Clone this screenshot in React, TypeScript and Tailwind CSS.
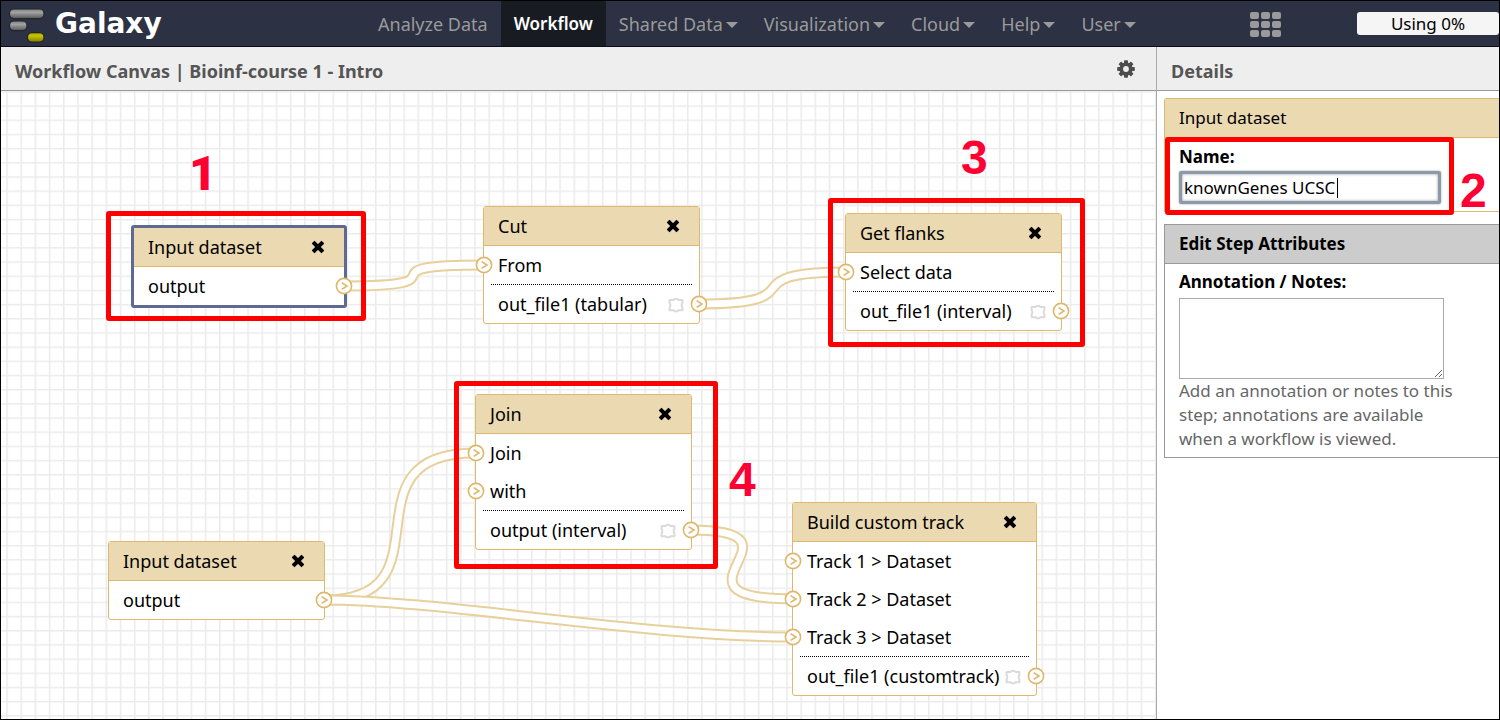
import React from "react";

type NodeSpec = {
  id: string;
  title: string;
  place: string;
  selected?: boolean;
  inputs: string[];
  output: string;
  rerunnable?: boolean;
};

const nodes: NodeSpec[] = [
  { id: "input-1", title: "Input dataset", place: "left-[130px] top-[134px] w-[216px]", selected: true, inputs: [], output: "output" },
  { id: "cut", title: "Cut", place: "left-[482px] top-[115px] w-[217px]", inputs: ["From"], output: "out_file1 (tabular)", rerunnable: true },
  { id: "flanks", title: "Get flanks", place: "left-[844px] top-[122px] w-[217px]", inputs: ["Select data"], output: "out_file1 (interval)", rerunnable: true },
  { id: "join", title: "Join", place: "left-[474px] top-[303px] w-[217px]", inputs: ["Join", "with"], output: "output (interval)", rerunnable: true },
  { id: "track", title: "Build custom track", place: "left-[791px] top-[411px] w-[245px]", inputs: ["Track 1 > Dataset", "Track 2 > Dataset", "Track 3 > Dataset"], output: "out_file1 (customtrack)", rerunnable: true },
  { id: "input-2", title: "Input dataset", place: "left-[107px] top-[450px] w-[217px]", inputs: [], output: "output" },
];

const wires = [
  "M342 195 C474 195 350 174 483 174",
  "M698 213 C820 213 724 181 846 181",
  "M323 509 C453 509 338 362 474 362",
  "M689 439 C818 439 650 508 793 508",
  "M323 509 C440 509 640 546 793 546",
];

const menus = [
  { label: "Analyze Data" },
  { label: "Workflow", active: true },
  { label: "Shared Data", caret: true },
  { label: "Visualization", caret: true },
  { label: "Cloud", caret: true },
  { label: "Help", caret: true },
  { label: "User", caret: true },
];

const marks = [
  { n: "1", box: "left-[105px] top-[120px] w-[260px] h-[110px]", digit: "left-[188px] top-[58px] font-['Roboto',sans-serif] font-black" },
  { n: "2", box: "left-[1164px] top-[46px] w-[289px] h-[78px]", digit: "left-[1459px] top-[75px] font-['Liberation_Sans',sans-serif] font-bold" },
  { n: "3", box: "left-[827px] top-[107px] w-[257px] h-[149px]", digit: "left-[960px] top-[42px] font-['Liberation_Sans',sans-serif] font-bold" },
  { n: "4", box: "left-[453px] top-[290px] w-[264px] h-[188px]", digit: "left-[728px] top-[364px] font-['Liberation_Sans',sans-serif] font-bold" },
];

function Terminal({ side }: { side: string }) {
  return (
    <svg aria-hidden="true" className={`absolute top-[10px] z-10 size-[18px] ${side}`} viewBox="0 0 18 18" fill="none" stroke="#ddb86c">
      <circle cx="9" cy="9" r="7.6" fill="#fff" strokeWidth="1.6" />
      <path d="M6.6 5.6 L12 9 L6.6 12.4" strokeWidth="1.6" />
    </svg>
  );
}

function Puzzle() {
  return (
    <svg aria-hidden="true" className="absolute right-[15px] top-[12px] size-4" viewBox="0 0 16 16" fill="none" stroke="#dadada" strokeWidth="2" strokeLinejoin="round">
      <path d="M1.6 3 H5.4 Q6.4 1.8 8 1.800 Q9.600 1.800 10.600 3 H14.400 V6.200 Q13.600 6.800 13.600 8.200 Q13.600 9.600 14.400 10.200 V13.200 H10.600 Q9.600 14.600 8 14.600 Q6.400 14.600 5.400 13.200 H1.600 V10.200 Q2.400 9.600 2.400 8.200 Q2.400 6.800 1.600 6.200 Z" />
    </svg>
  );
}

function WorkflowNode({ node }: { node: NodeSpec }) {
  return (
    <section
      aria-label={node.title}
      className={`absolute rounded-[3px] bg-white text-lg leading-6 ${node.place} ${node.selected ? "border-[3px] border-[#5f6a93]" : "border border-[#dcb96f]"}`}
    >
      <header className="flex h-[39px] items-center justify-between border-b border-[#dcb96f] bg-[#ebd9b2] pl-[14px] pr-[18px]">
        <h2>{node.title}</h2>
        <button type="button" aria-label={`Remove ${node.title}`} className="flex size-4 items-center justify-center">
          <svg aria-hidden="true" className="size-[14px]" viewBox="-7 -7 14 14" fill="#000">
            <rect x="-7" y="-2.100" width="14" height="4.200" rx="0.800" transform="rotate(45)" />
            <rect x="-7" y="-2.100" width="14" height="4.200" rx="0.800" transform="rotate(-45)" />
          </svg>
        </button>
      </header>
      {node.inputs.map((label) => (
        <div key={label} className="relative flex h-[38px] items-center pl-[14px]">
          <Terminal side="-left-[9px]" />
          {label}
        </div>
      ))}
      {node.inputs.length > 0 && <div className="mx-[7px] border-t border-dotted border-black" />}
      <div className="relative flex h-[38px] items-center whitespace-nowrap pl-[14px]">
        {node.output}
        {node.rerunnable && <Puzzle />}
        <Terminal side="-right-[9px]" />
      </div>
    </section>
  );
}

function Logo() {
  return (
    <svg aria-hidden="true" className="h-[45px] w-[38px]" viewBox="0 0 38 45">
      <defs>
        <linearGradient id="steel" x1="0" y1="0" x2="0" y2="1">
          <stop offset="0" stopColor="#7d7d7d" />
          <stop offset="0.35" stopColor="#a3a3a3" />
          <stop offset="1" stopColor="#555" />
        </linearGradient>
        <linearGradient id="gold" x1="0" y1="0" x2="0" y2="1">
          <stop offset="0" stopColor="#a8a400" />
          <stop offset="0.35" stopColor="#c9c400" />
          <stop offset="1" stopColor="#7f7a00" />
        </linearGradient>
      </defs>
      <g stroke="#23252d" strokeWidth="1.2">
        <rect x="1.500" y="8" width="34.500" height="9.600" rx="4.600" fill="url(#steel)" />
        <rect x="1.500" y="20" width="17.500" height="9.600" rx="4.600" fill="url(#steel)" />
        <rect x="19.500" y="31.600" width="16.500" height="9.600" rx="4.600" fill="url(#gold)" />
      </g>
    </svg>
  );
}

function Gear() {
  return (
    <svg aria-hidden="true" className="size-[18px]" viewBox="-9 -9 18 18">
      <g fill="#4d4d4d">
        {[0, 45, 90, 135].map((a) => (
          <rect key={a} x="-2" y="-8.800" width="4" height="17.600" rx="0.800" transform={`rotate(${a})`} />
        ))}
        <circle r="6.600" />
      </g>
      <circle r="2.900" fill="#eee" />
    </svg>
  );
}

export default function App() {
  return (
    <div className="flex min-h-screen flex-col border border-black bg-white font-['Noto_Sans',sans-serif] text-[17px] leading-6 text-black">
      <header className="flex h-[46px] items-stretch border-b border-[#0c0d14] bg-[#2c3143]">
        <a href="#home" className="flex w-[364px] shrink-0 items-center gap-[9px] pl-[7px] text-white">
          <Logo />
          <span className="font-['DejaVu_Sans',sans-serif] text-[28px] font-bold">Galaxy</span>
        </a>
        <nav aria-label="Main" className="flex">
          {menus.map((m) => (
            <a
              key={m.label}
              href={`#${m.label}`}
              className={`flex items-center gap-[3px] whitespace-nowrap px-[13px] ${m.active ? "bg-[#191b23] font-semibold text-white" : "text-lg leading-6 text-[#9a9a9a]"}`}
            >
              {m.label}
              {m.caret && <span className="mt-[2px] border-x-[6px] border-t-[6px] border-x-transparent border-t-[#9a9a9a]" />}
            </a>
          ))}
        </nav>
        <button type="button" aria-label="Scratchbook" className="ml-auto mr-[76px] grid grid-cols-3 content-center gap-[2px] pt-[2px]">
          {[0, 1, 2, 3, 4, 5, 6, 7, 8].map((i) => (
            <span key={i} className="h-[7px] w-[9px] rounded-[2px] bg-[#9a9a9a]" />
          ))}
        </button>
        <div className="flex h-[23px] w-[142px] shrink-0 items-center justify-center self-center rounded-[3px] bg-[#f5f5f5]">Using 0%</div>
      </header>

      <main className="relative flex flex-1">
        <div className="flex min-w-0 flex-1 flex-col">
          <div className="flex h-11 items-center justify-between border-b border-[#999] bg-[#eee] pl-[14px] pr-[21px] pt-[5px]">
            <h1 className="text-lg leading-6 font-bold text-[#555]">Workflow Canvas | Bioinf-course 1 - Intro</h1>
            <button type="button" aria-label="Workflow options" className="pb-[5px]">
              <Gear />
            </button>
          </div>
          <div className="relative min-h-[628px] flex-1 overflow-hidden">
            <svg aria-hidden="true" className="absolute inset-0 size-full">
              <defs>
                <pattern id="grid" x="5.300" y="0.200" width="14.180" height="14.180" patternUnits="userSpaceOnUse">
                  <path d="M0 0.750 H14.180 M0.750 0 V14.180" fill="none" stroke="#ebebeb" strokeWidth="1.500" />
                </pattern>
              </defs>
              <rect width="100%" height="100%" fill="url(#grid)" />
              {wires.map((d) => (
                <g key={d} fill="none">
                  <path d={d} stroke="#e8d09d" strokeWidth="11" />
                  <path d={d} stroke="#fff" strokeWidth="7" />
                </g>
              ))}
            </svg>
            {nodes.map((n) => (
              <WorkflowNode key={n.id} node={n} />
            ))}
          </div>
        </div>

        <aside className="w-[343px] shrink-0 border-l border-[#aaa] bg-white">
          <h2 className="flex h-11 items-center border-b border-[#999] bg-[#eee] pl-[14px] pt-[5px] text-lg leading-6 font-bold text-[#555]">Details</h2>
          <div className="flex flex-col gap-3 pl-[7px] pt-[7px]">
            <section className="rounded-tl-[3px] border border-r-0 border-[#dcb96f]">
              <h3 className="flex h-[39px] items-center border-b border-[#dcb96f] bg-[#ebd9b2] pl-[14px]">Input dataset</h3>
              <div className="flex flex-col gap-[2px] px-[14px] py-[7px]">
                <label htmlFor="step-name" className="font-bold">Name:</label>
                <div className="relative w-[262px]">
                  <input
                    id="step-name"
                    type="text"
                    defaultValue="knownGenes UCSC"
                    className="h-[33px] w-full rounded-[2px] border-[3px] border-[#8d99a5] px-[2px] shadow-[0_0_2px_#8d99a5,inset_0_0_3px_#8d99a5] outline-none"
                  />
                  <span aria-hidden="true" className="absolute left-[158px] top-[7px] h-5 w-px bg-black" />
                </div>
              </div>
            </section>
            <section className="border border-r-0 border-[#999]">
              <h3 className="flex h-[39px] items-center border-b border-[#999] bg-[#ccc] pl-[14px] font-bold">Edit Step Attributes</h3>
              <div className="flex flex-col px-[14px] py-[6px]">
                <label htmlFor="step-notes" className="mb-1 font-bold">Annotation / Notes:</label>
                <textarea id="step-notes" className="h-[81px] w-[265px] resize border border-[#aaa] outline-none" />
                <p className="w-[285px] text-[#666]">Add an annotation or notes to this step; annotations are available when a workflow is viewed.</p>
              </div>
            </section>
          </div>
        </aside>

        <div className="pointer-events-none absolute left-0 top-[44px] z-20">
          {marks.map((m) => (
            <React.Fragment key={m.n}>
              <div className={`absolute rounded-[3px] border-[5px] border-[#f00] ${m.box}`} />
              <span className={`absolute text-[48px] leading-[50px] text-[#ff0033] ${m.digit}`}>{m.n}</span>
            </React.Fragment>
          ))}
        </div>
      </main>
    </div>
  );
}
